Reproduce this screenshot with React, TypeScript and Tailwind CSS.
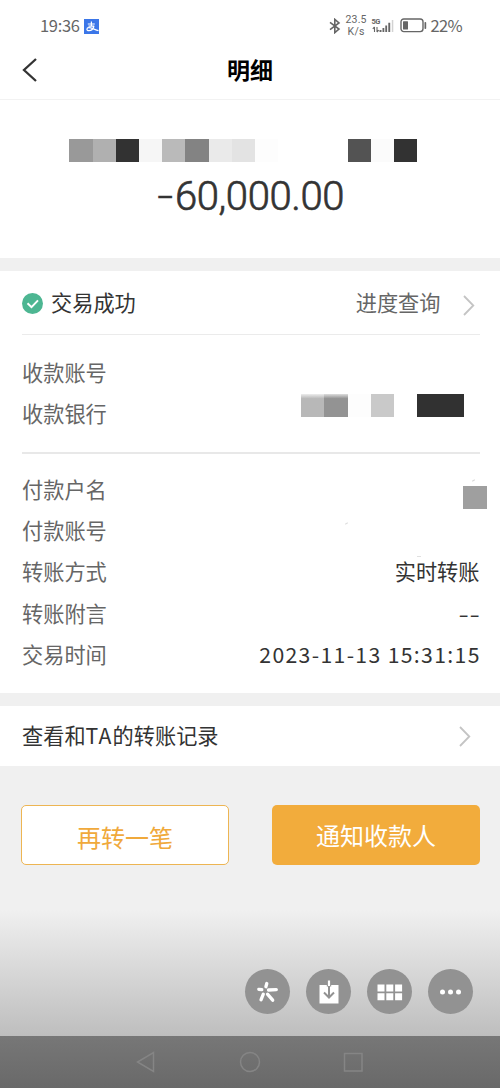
import React from "react"

const nameBlocks = [
  'bg-[#999999]', 'bg-[#b0b0b0]', 'bg-[#323232]', 'bg-[#f6f6f6]', 'bg-[#bababa]',
  'bg-[#838383]', 'bg-[#eaeaea]', 'bg-[#e3e3e3]', 'bg-[#fdfdfd]', 'bg-white',
  'bg-white', 'bg-white', 'bg-[#535353]', 'bg-[#fbfbfb]', 'bg-[#323232]',
]

function StatusBar() {
  return (
    <div className="h-10 flex justify-between pt-3 pl-10 pr-[38px] text-[#666]">
      <div className="flex items-center h-[27px]">
        <span className="w-[40px] text-[16.5px] leading-none tracking-[-0.3px]">19:36</span>
        <svg className="ml-1 mt-px" width="15" height="15" viewBox="0 0 15 15">
          <rect width="15" height="15" fill="#3b76e8" />
          <path d="M3.800 5h7M7.400 2.500v4.500M4.500 7.200h5.800M10 7.200c-.8 2.500-2.800 4.500-5 4.500-3 0-2.500-3-.2-3 2.500 0 5.500 1.800 9.700 3" fill="none" stroke="#fff" strokeWidth="1.200" />
        </svg>
      </div>
      <div className="flex items-center h-[27px]">
        <svg width="12" height="16" viewBox="0 0 12 16" fill="none" stroke="#666" strokeWidth="1.600">
          <path d="M1 4.300L10 11 5.800 14.600V1.400L10 5 1 11.700" />
        </svg>
        <div className="ml-[4px] w-[23px] text-center font-[Roboto,sans-serif] text-[10.500px] leading-[12px] tracking-[0.2px]">
          <div>23.5</div>
          <div>K/s</div>
        </div>
        <div className="ml-[4px] w-[22px] flex flex-col">
          <span className="font-[Roboto,sans-serif] text-[7.500px] leading-[7px] h-[5px] font-bold tracking-[-0.7px]">5G</span>
          <svg className="-mt-[5px]" width="22" height="15" viewBox="0 0 22 15">
            <path d="M2.500 9v5M.8 10.800L2.500 9M5 9v5M5 14l1.700-1.800" stroke="#666" strokeWidth="1.100" fill="none" />
            <path d="M7.500 12h2v2h-2zM10.500 10h1.800v4h-1.800zM13.300 7.500h1.800V14h-1.800zM16.300 4.800h1.900V14h-1.900z" fill="#666" />
            <path d="M19.800 2h1.500v12h-1.500z" fill="#d2d2d2" />
          </svg>
        </div>
        <svg className="ml-[6px]" width="27" height="15" viewBox="0 0 27 15">
          <rect x="1" y="1" width="22" height="12.600" rx="2.800" fill="none" stroke="#666" strokeWidth="1.400" />
          <rect x="3" y="3.200" width="5" height="8.200" rx="0.500" fill="#666" />
          <rect x="24.500" y="4" width="1.700" height="7" rx="0.800" fill="#666" />
        </svg>
        <span className="ml-1 text-[16.500px] leading-none tracking-[-0.700px]">22%</span>
      </div>
    </div>
  )
}

function Arrow() {
  return (
    <svg width="12" height="21" viewBox="0 0 12 21" fill="none" stroke="#c4c4c4" strokeWidth="1.8">
      <path d="M1 1l9.300 9.500L1 20" />
    </svg>
  )
}

function Row({ label, children }: { label: string, children?: React.ReactNode }) {
  return (
    <div className="h-[41.2px] flex items-center justify-between text-[21.2px] leading-none">
      <span className="text-[#666]">{label}</span>
      <span className="text-[#333] whitespace-nowrap">{children}</span>
    </div>
  )
}

function RoundButton({ children }: { children: React.ReactNode }) {
  return (
    <button className="size-[45px] rounded-full bg-[#929292] flex items-center justify-center">
      <svg width="45" height="45" viewBox="0 0 45 45">{children}</svg>
    </button>
  )
}

export default function App() {
  return (
    <div className="w-[500px] h-[1088px] overflow-hidden flex flex-col bg-[#f0f0f0] font-['Noto_Sans_CJK_SC',sans-serif]">
      <div className="bg-white">
        <StatusBar />
        <div className="h-[60px] flex items-center border-b border-[#f2f2f2] px-[22px]">
          <svg width="16" height="24" viewBox="0 0 16 24" fill="none" stroke="#333" strokeWidth="2.3">
            <path d="M14 1L2 12l12 11" />
          </svg>
          <h1 className="flex-1 text-center text-[23px] leading-none font-bold text-black pr-4">明细</h1>
        </div>
        <div className="h-[158px] pt-[39px]">
          <div className="flex ml-[69.4px]">
            {nameBlocks.map((color, i) => (
              <div key={i} className={`w-[23.2px] h-[23px] ${color}`}></div>
            ))}
          </div>
          <div className="mt-[15px] pl-[153px] flex font-[Roboto,sans-serif] font-light text-[40px] leading-[40px] text-[#333]">
            <span className="inline-block w-[22px] pl-[3px] origin-left scale-x-140 [-webkit-text-stroke:0.5px_#333]">-</span>
            <span className="tracking-[-0.4px] [-webkit-text-stroke:0.7px_#333]">60,000.00</span>
          </div>
        </div>
      </div>

      <div className="mt-[13px] bg-white h-[422px] pl-[22px] pr-[20.5px]">
        <div className="h-[64px] flex items-center border-b border-[#ebebeb]">
          <svg width="22" height="22" viewBox="0 0 22 22" fill="none">
            <circle cx="10.500" cy="11.500" r="10.500" fill="#4db692" />
            <path d="M5.500 11.200l4 3.900 6.500-6.700" stroke="#fff" strokeWidth="2" />
          </svg>
          <span className="ml-[7px] -mt-[2px] text-[21.2px] leading-none text-[#333]">交易成功</span>
          <span className="ml-auto -mt-[2px] text-[21.2px] leading-none text-[#666]">进度查询</span>
          <div className="ml-[22px] mr-[5px] mt-[6px]">
            <Arrow />
          </div>
        </div>
        <div className="h-[118.5px] pt-[16px] border-b-2 border-[#e8e8e8]">
          <Row label="收款账号" />
          <Row label="收款银行">
            <div className="flex mr-4 -mt-[14px]">
              <div className="w-[23.2px] h-[23px] bg-linear-to-b from-[#ededed] to-[#b8b8b8] to-20%"></div>
              <div className="w-[23.2px] h-[23px] bg-linear-to-b from-[#dedede] to-[#939393] to-20%"></div>
              <div className="w-[23.2px] h-[23px] bg-[#fdfdfd]"></div>
              <div className="w-[23.2px] h-[23px] bg-[#c9c9c9]"></div>
              <div className="w-[23.2px] h-[23px]"></div>
              <div className="w-[46.4px] h-[23px] bg-[#313131]"></div>
            </div>
          </Row>
        </div>
        <div className="pt-[14.5px] relative">
          <Row label="付款户名">
            <div className="size-[23.500px] -mr-[7px] mt-[18px] bg-[#9f9f9f]"></div>
          </Row>
          <Row label="付款账号" />
          <Row label="转账方式">实时转账</Row>
          <Row label="转账附言">
            <span className="flex gap-[4px] pr-px">
              <span className="inline-block scale-x-140">-</span>
              <span className="inline-block scale-x-140">-</span>
            </span>
          </Row>
          <Row label="交易时间">
            <span className="tracking-[1.35px] -mr-[1.3px]">2023-11-13 15:31:15</span>
          </Row>
          <i className="absolute right-[5px] top-[26px] w-[3px] h-px bg-[#d8d8d8] -rotate-30"></i>
          <i className="absolute left-[323px] top-[69px] w-[3px] h-px bg-[#dedede] -rotate-30"></i>
          <i className="absolute left-[395px] top-[102px] w-[4px] h-px bg-[#e0e0e0]"></i>
        </div>
      </div>

      <div className="mt-[13px] bg-white h-[60px] pl-[22px] pr-[29px] flex items-center justify-between">
        <span className="-mt-[3px] text-[21.2px] leading-none text-[#333]">查看和<span className="tracking-[1.2px]">TA</span>的转账记录</span>
        <Arrow />
      </div>

      <div className="mt-[39px] flex justify-between pl-[21px] pr-5 h-[60px] text-[24px] leading-none">
        <button className="w-[208px] rounded-[5px] border-[1.5px] border-[#edb553] bg-white text-[#f0a93b] pt-[3px]">再转一笔</button>
        <button className="w-[208px] rounded-[5px] bg-[#f2ac3c] text-white pb-[1px]">通知收款人</button>
      </div>

      <div className="mt-[45px] h-[126px] pt-[59px] pr-[27.5px] flex items-start justify-end gap-[16px] bg-linear-to-b from-[#f0f0f0] to-[#bebebe]">
        <RoundButton>
          <g stroke="#fff" strokeWidth="3.300" strokeLinecap="round">
            <path d="M21.800 14.500l-.9 3.200M13.800 20.300l3 .4M23.500 21l7.800-.4M18.300 25.200l-2.300 5.600M22.500 25.200l5.200 6" />
          </g>
        </RoundButton>
        <RoundButton>
          <path d="M13.500 16h19v18.500h-19z" fill="#fff" />
          <path d="M20.800 16h4.400v1.500h-4.400z" fill="#929292" />
          <path d="M23 16v12M18 23.500l5 5 5-5" fill="none" stroke="#929292" strokeWidth="2" />
          <path d="M23 11.500v5.500" stroke="#fff" strokeWidth="2.200" />
        </RoundButton>
        <RoundButton>
          <path d="M10.500 15.500h7v7h-7zM19.300 15.500h7v7h-7zM28.100 15.500h7v7h-7zM10.500 24.300h7v7h-7zM19.300 24.300h7v7h-7zM28.100 24.300h7v7h-7z" fill="#fff" />
        </RoundButton>
        <RoundButton>
          <g fill="#fff">
            <circle cx="14.500" cy="23" r="2.500" />
            <circle cx="22.500" cy="23" r="2.500" />
            <circle cx="30.500" cy="23" r="2.500" />
          </g>
        </RoundButton>
      </div>

      <div className="h-[52px] flex items-start justify-center bg-linear-to-b from-[#777777] to-[#696969] pt-[15px]">
        <svg width="228" height="22" viewBox="0 0 228 22" fill="none" stroke="#858585" strokeWidth="1.500">
          <path d="M17.500 1.500v19L1.500 11z" />
          <circle cx="114" cy="11" r="9.500" />
          <path d="M208.500 2.500h17.500v17.500h-17.500z" />
        </svg>
      </div>
    </div>
  )
}
